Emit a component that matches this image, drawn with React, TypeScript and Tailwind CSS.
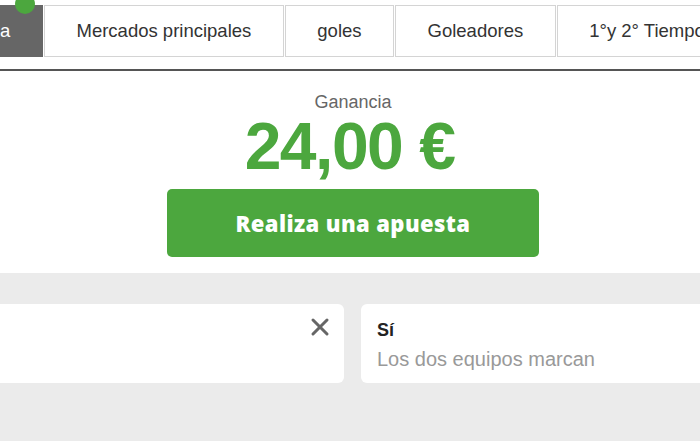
import { X } from 'lucide-react';

const tabs = ['Mercados principales', 'goles', 'Goleadores', '1°y 2° Tiempo'];

export default function App() {
  return (
    <div className="w-[700px] h-[441px] overflow-hidden bg-white font-['Liberation_Sans',Arial,sans-serif]">
      {/* tabs */}
      <div className="relative pt-[5px] overflow-hidden">
        <div className="flex h-[52px] text-[18.5px] text-[#333] whitespace-nowrap">
          <div className="w-[43px] shrink-0 bg-[#666] text-white flex items-center">a</div>
          {tabs.map((t) => (
            <div key={t} className="ml-[1px] shrink-0 border border-[#d4d4d4] px-[31.5px] flex items-center">
              {t}
            </div>
          ))}
        </div>
        <div className="absolute left-[15px] top-[-6px] w-5 h-5 rounded-full bg-[#4ca73e]" />
      </div>
      <div className="mt-[12px] h-[2px] bg-[#555]" />

      {/* summary */}
      <div className="flex flex-col items-center pl-[6px] pb-4">
        <div className="mt-[22px] text-[18px] leading-[18px] text-[#666]">Ganancia</div>
        <div className="mt-[2px] mr-[7px] text-[66px] leading-[66px] font-bold tracking-[-1.5px] text-[#4ca73e]">24,00 €</div>
        <button className="mt-[10px] w-[372px] h-[68px] rounded-[5px] bg-[#4ca73e] text-white text-[22px] font-extrabold font-['Open_Sans',sans-serif] tracking-[0.4px]">
          Realiza una apuesta
        </button>
      </div>

      {/* selections */}
      <div className="bg-[#ebebeb] h-[200px] pt-[31px] overflow-hidden">
        <div className="flex gap-[17px] ml-[-16px]">
          <div className="w-[360px] h-[79px] shrink-0 bg-white rounded-[6px] flex justify-end items-start pt-[9px] pr-[10px]">
            <X size={28} strokeWidth={2.6} className="text-[#666]" />
          </div>
          <div className="w-[360px] h-[79px] shrink-0 bg-white rounded-[6px] pl-4 pt-[17px]">
            <div className="text-[18px] leading-[18px] font-bold text-[#222]">Sí</div>
            <div className="mt-[10px] text-[20px] leading-[20px] text-[#999]">Los dos equipos marcan</div>
          </div>
        </div>
      </div>
    </div>
  );
}
